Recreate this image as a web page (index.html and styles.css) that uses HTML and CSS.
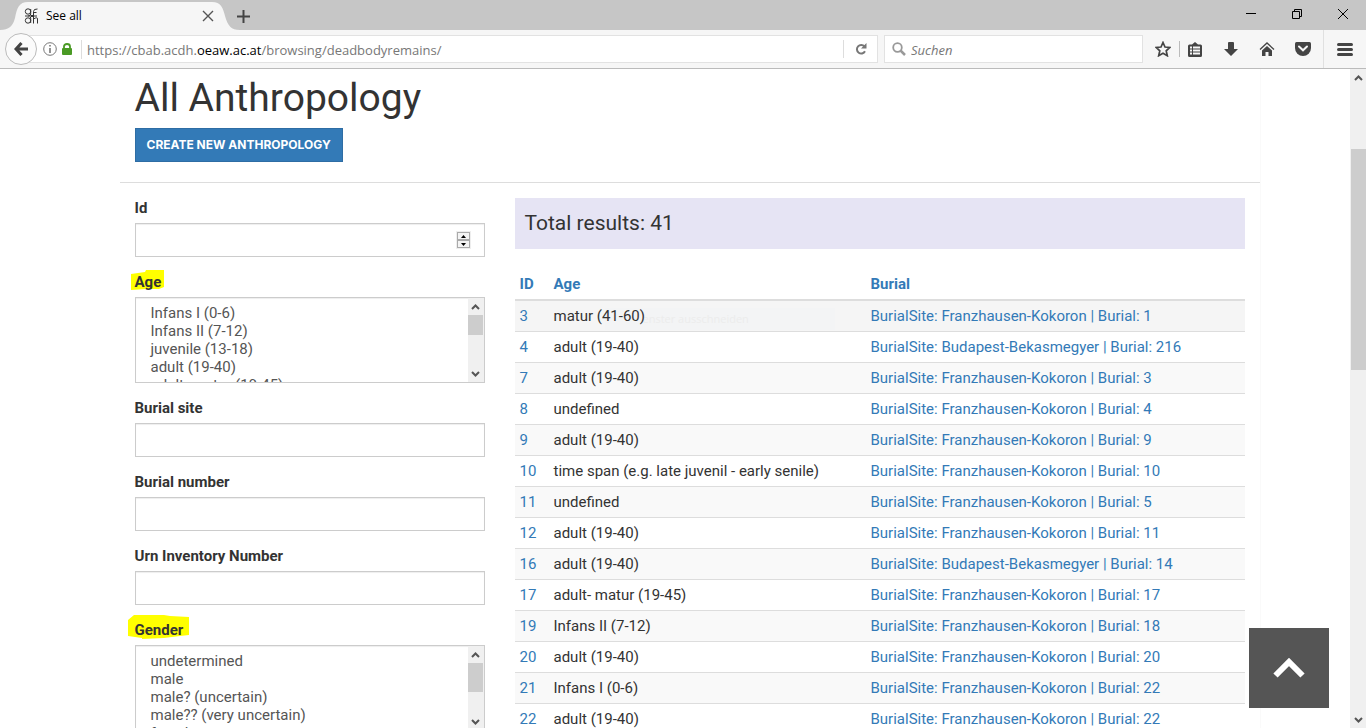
FILE: index.html
```html
<!DOCTYPE html>
<html lang="en">
<head>
<meta charset="utf-8">
<title>See all</title>
<link rel="stylesheet" href="styles.css">
</head>
<body>
<header class="browser">
  <div class="tabbar">
    <div class="tab">
      <svg class="tab-shape" width="240" height="30" viewBox="0 0 240 30" aria-hidden="true"><path d="M0 30C9 30 13 26 15 18C17 8 19 2 28 2H212C221 2 223 8 225 16C228 26 231 30 240 30Z" fill="#f6f6f6"/></svg>
      <svg class="favicon" width="16" height="16" viewBox="0 0 16 16" fill="none" stroke="#333" aria-hidden="true"><circle cx="4" cy="3.500" r="2.700"/><circle cx="4" cy="12.500" r="2.700"/><path d="M6.700 1V6Q6.500 8 4 8H1M6.700 15V10M9.500 15.500V3.500Q9.500 .8 13.500 1M9.500 4.500H12.500M4 8H13M6 6L10 10M10 6L6 10M9.500 11Q13.500 8.500 13.500 11V15.500"/></svg>
      <span class="tab-title">See all</span>
      <button class="plain" aria-label="Close tab"><svg width="12" height="12" viewBox="0 0 12 12" stroke="#555" stroke-width="1.4"><path d="M1 1L11 11M11 1L1 11"/></svg></button>
    </div>
    <button class="plain new-tab" aria-label="New tab"><svg width="13" height="13" viewBox="0 0 13 13" stroke="#444" stroke-width="2"><path d="M6.500 0V13M0 6.500H13"/></svg></button>
    <div class="window-buttons">
      <button class="plain" aria-label="Minimize"><svg width="10" height="10" viewBox="0 0 10 10" stroke="#000"><path d="M0 4.500H10"/></svg></button>
      <button class="plain" aria-label="Restore"><svg width="10" height="10" viewBox="0 0 10 10" fill="none" stroke="#000"><path d="M.5 2.500H7.500V9.500H.5ZM2.500 2.500V.5H9.500V7.500H7.500"/></svg></button>
      <button class="plain" aria-label="Close"><svg width="10" height="10" viewBox="0 0 10 10" stroke="#000"><path d="M0 0L10 10M10 0L0 10"/></svg></button>
    </div>
  </div>
  <div class="toolbar">
    <button class="plain back" aria-label="Back"><svg width="14" height="14" viewBox="0 0 14 14" fill="none" stroke="#444" stroke-width="3"><path d="M7.500 1L2 7L7.500 13M2 7H14"/></svg></button>
    <div class="urlbar">
      <svg width="14" height="14" viewBox="0 0 14 14" fill="none" stroke="#777" aria-hidden="true"><circle cx="7" cy="7" r="6.300"/><path d="M7 6V11M7 3V4.600" stroke-width="1.600"/></svg>
      <svg width="10" height="12" viewBox="0 0 10 12" aria-hidden="true"><rect y="5" width="10" height="7" rx="1" fill="#4a9a25"/><path d="M2 6V3.500Q2 1 5 1T8 3.500V6" fill="none" stroke="#4a9a25" stroke-width="1.800"/></svg>
      <div class="address" role="textbox" aria-label="Address">https://cbab.acdh.<b>oeaw.ac.at</b>/browsing/deadbodyremains/</div>
      <button class="plain reload" aria-label="Reload"><svg width="12" height="12" viewBox="0 0 12 12"><path d="M9.500 3.500A4.300 4.300 0 1 0 10 8.300" fill="none" stroke="#777" stroke-width="2"/><path d="M11.500 0V5.500H6Z" fill="#777"/></svg></button>
    </div>
    <label class="search">
      <svg width="14" height="14" viewBox="0 0 14 14" fill="none" stroke="#999" aria-hidden="true"><circle cx="5.500" cy="5.500" r="4.300" stroke-width="1.800"/><path d="M8.500 8.500L13 13" stroke-width="2.500"/></svg>
      <input type="text" placeholder="Suchen" aria-label="Suchen">
    </label>
    <nav class="tools">
      <button class="plain star" aria-label="Bookmark"><svg width="16" height="16" viewBox="0 0 16 16" fill="none" stroke="#444" stroke-width="1.700"><path d="M8 1.500L10 6L14.800 6.500L11.200 9.800L12.300 14.700L8 12.200L3.700 14.700L4.800 9.800L1.200 6.500L6 6Z"/></svg></button>
      <button class="plain split" aria-label="Library"><svg width="14" height="15" viewBox="0 0 14 15"><path d="M1.500 2.500H4L7 0L10 2.500H12.500Q14 2.500 14 4V13.500Q14 15 12.500 15H1.500Q0 15 0 13.500V4Q0 2.500 1.500 2.500Z" fill="#444"/><path d="M2 5.500H4M5 5.500H12M2 8.500H4M5 8.500H12M2 11.500H4M5 11.500H12" stroke="#f6f6f6" stroke-width="2"/></svg></button>
      <button class="plain" aria-label="Downloads"><svg width="14" height="14" viewBox="0 0 14 14" fill="#444"><path d="M4 1Q4 0 5 0H9Q10 0 10 1V7H14L7 14L0 7H4Z"/></svg></button>
      <button class="plain" aria-label="Home"><svg width="16" height="14" viewBox="0 0 16 14"><path d="M1 7.500L8 1L15 7.500" fill="none" stroke="#444" stroke-width="1.300"/><path d="M3 8.500L8 4L13 8.500V14H9.500V10H6.500V14H3Z" fill="#444"/></svg></button>
      <button class="plain" aria-label="Pocket"><svg width="16" height="14" viewBox="0 0 16 14"><path d="M1.500 0H14.500Q16 0 16 1.500V6A8 8 0 0 1 0 6V1.500Q0 0 1.500 0Z" fill="#444"/><path d="M4 4.500L8 8.300L12 4.500" fill="none" stroke="#f6f6f6" stroke-width="2" stroke-linecap="round"/></svg></button>
      <button class="plain menu" aria-label="Menu"><svg width="16" height="13" viewBox="0 0 16 13" stroke="#444" stroke-width="3" stroke-linecap="round"><path d="M1.500 1.500H14.500M1.500 6.500H14.500M1.500 11.500H14.500"/></svg></button>
    </nav>
  </div>
</header>
<div class="viewport">
  <div class="page">
    <main class="container">
      <div class="page-head">
        <h1>All Anthropology</h1>
        <a class="create" href="#">CREATE NEW ANTHROPOLOGY</a>
      </div>
      <div class="columns">
        <form class="filters">
          <div class="field">
            <label for="id">Id</label>
            <div class="control number"><input id="id" type="text" inputmode="numeric">
              <div class="spinner">
                <button type="button" class="plain" aria-label="Increase"><svg width="5" height="3" viewBox="0 0 5 3"><path d="M0 3L2.500 0L5 3Z"/></svg></button>
                <button type="button" class="plain" aria-label="Decrease"><svg width="5" height="3" viewBox="0 0 5 3"><path d="M0 0L2.500 3L5 0Z"/></svg></button>
              </div>
            </div>
          </div>
          <div class="field">
            <label for="age"><svg class="marker marker-age" width="34" height="22" viewBox="0 0 34 22" aria-hidden="true"><path d="M0 4L14 2L15 0H33V17L28 19H15L0 20Z" fill="#ff0"/></svg><span>Age</span></label>
            <div class="control list">
              <select id="age" multiple>
                <option>Infans I (0-6)</option><option>Infans II (7-12)</option><option>juvenile (13-18)</option><option>adult (19-40)</option><option>adult- matur (19-45)</option><option>matur (41-60)</option><option>undefined</option>
              </select>
              <div class="scroll"><svg width="9" height="6" viewBox="0 0 9 6"><path d="M1 5L4.500 1.500L8 5"/></svg><i class="thumb thumb-age"></i><svg width="9" height="6" viewBox="0 0 9 6"><path d="M1 1L4.500 4.500L8 1"/></svg></div>
            </div>
          </div>
          <div class="field"><label for="site">Burial site</label><div class="control"><input id="site" type="text"></div></div>
          <div class="field"><label for="number">Burial number</label><div class="control"><input id="number" type="text"></div></div>
          <div class="field"><label for="urn">Urn Inventory Number</label><div class="control"><input id="urn" type="text"></div></div>
          <div class="field">
            <label for="gender"><svg class="marker marker-gender" width="62" height="26" viewBox="0 0 62 26" aria-hidden="true"><path d="M0 6L6 1H36L42 2L61 3V21L52 22L36 24L14 25V24L0 22Z" fill="#ff0"/></svg><span>Gender</span></label>
            <div class="control list">
              <select id="gender" multiple>
                <option>undetermined</option><option>male</option><option>male? (uncertain)</option><option>male?? (very uncertain)</option><option>female</option><option>female? (uncertain)</option>
              </select>
              <div class="scroll"><svg width="9" height="6" viewBox="0 0 9 6"><path d="M1 5L4.500 1.500L8 5"/></svg><i class="thumb thumb-gender"></i><svg width="9" height="6" viewBox="0 0 9 6"><path d="M1 1L4.500 4.500L8 1"/></svg></div>
            </div>
          </div>
        </form>
        <section class="results">
          <h2>Total results: 41</h2>
          <table>
            <thead><tr><th class="col-id"><a href="#">ID</a></th><th class="col-age"><a href="#">Age</a></th><th><a href="#">Burial</a></th></tr></thead>
            <tbody>
              <tr class="hovered"><td><a href="#">3</a></td><td class="age-cell"><span class="ghost">enster ausschneiden</span>matur (41-60)</td><td><a href="#">BurialSite: Franzhausen-Kokoron | Burial: 1</a></td></tr>
              <tr><td><a href="#">4</a></td><td>adult (19-40)</td><td><a href="#">BurialSite: Budapest-Bekasmegyer | Burial: 216</a></td></tr>
              <tr><td><a href="#">7</a></td><td>adult (19-40)</td><td><a href="#">BurialSite: Franzhausen-Kokoron | Burial: 3</a></td></tr>
              <tr><td><a href="#">8</a></td><td>undefined</td><td><a href="#">BurialSite: Franzhausen-Kokoron | Burial: 4</a></td></tr>
              <tr><td><a href="#">9</a></td><td>adult (19-40)</td><td><a href="#">BurialSite: Franzhausen-Kokoron | Burial: 9</a></td></tr>
              <tr><td><a href="#">10</a></td><td>time span (e.g. late juvenil - early senile)</td><td><a href="#">BurialSite: Franzhausen-Kokoron | Burial: 10</a></td></tr>
              <tr><td><a href="#">11</a></td><td>undefined</td><td><a href="#">BurialSite: Franzhausen-Kokoron | Burial: 5</a></td></tr>
              <tr><td><a href="#">12</a></td><td>adult (19-40)</td><td><a href="#">BurialSite: Franzhausen-Kokoron | Burial: 11</a></td></tr>
              <tr><td><a href="#">16</a></td><td>adult (19-40)</td><td><a href="#">BurialSite: Budapest-Bekasmegyer | Burial: 14</a></td></tr>
              <tr><td><a href="#">17</a></td><td>adult- matur (19-45)</td><td><a href="#">BurialSite: Franzhausen-Kokoron | Burial: 17</a></td></tr>
              <tr><td><a href="#">19</a></td><td>Infans II (7-12)</td><td><a href="#">BurialSite: Franzhausen-Kokoron | Burial: 18</a></td></tr>
              <tr><td><a href="#">20</a></td><td>adult (19-40)</td><td><a href="#">BurialSite: Franzhausen-Kokoron | Burial: 20</a></td></tr>
              <tr><td><a href="#">21</a></td><td>Infans I (0-6)</td><td><a href="#">BurialSite: Franzhausen-Kokoron | Burial: 22</a></td></tr>
              <tr><td><a href="#">22</a></td><td>adult (19-40)</td><td><a href="#">BurialSite: Franzhausen-Kokoron | Burial: 22</a></td></tr>
            </tbody>
          </table>
        </section>
      </div>
    </main>
  </div>
  <div class="scroll page-scroll"><svg width="9" height="6" viewBox="0 0 9 6"><path d="M1 5L4.500 1.500L8 5"/></svg><i class="thumb thumb-page"></i><svg width="9" height="6" viewBox="0 0 9 6"><path d="M1 1L4.500 4.500L8 1"/></svg></div>
  <button class="plain to-top" aria-label="Back to top"><svg width="32" height="20" viewBox="0 0 32 20" fill="none" stroke="#fff" stroke-width="6"><path d="M2.500 17.500L16 4L29.500 17.500"/></svg></button>
</div>
</body>
</html>
```

FILE: styles.css
```css
* { box-sizing: border-box; }
body {
  margin: 0;
  height: 100vh;
  display: flex;
  flex-direction: column;
  overflow: hidden;
  background: #fff;
  color: #333;
  font: 15px/20px Roboto, "Liberation Sans", sans-serif;
}
a { color: #337ab7; text-decoration: none; }
svg { display: block; flex: none; }
.plain {
  display: flex;
  align-items: center;
  justify-content: center;
  padding: 0;
  border: 0;
  background: none;
}

/* Browser frame */
.browser { font-family: "Open Sans", "Noto Sans", sans-serif; }
.tabbar { display: flex; height: 30px; background: #c6c6c6; }
.tab {
  position: relative;
  display: flex;
  align-items: center;
  width: 228px;
  padding: 2px 14px 0 24px;
  color: #000;
  font-size: 12px;
}
.tab-shape { position: absolute; left: 0; top: 0; }
.favicon, .tab-title, .tab button { position: relative; }
.tab-title { flex: 1; padding-left: 6px; }
.new-tab { width: 30px; padding-top: 2px; }
.window-buttons { display: flex; align-items: center; gap: 36px; margin-left: auto; padding: 0 18px 2px 0; }
.toolbar {
  display: flex;
  align-items: center;
  height: 39px;
  background: #f6f6f6;
  border-bottom: 1px solid #bbb;
  padding-left: 5px;
}
.back {
  position: relative;
  flex: none;
  width: 32px;
  height: 32px;
  border: 1px solid #bbb;
  border-radius: 50%;
  background: #fbfbfb;
}
.urlbar {
  flex: 1;
  display: flex;
  align-items: center;
  gap: 5px;
  height: 28px;
  margin-left: -16px;
  padding-left: 21px;
  border: 1px solid #e2e2e2;
  background: #fff;
}
.address {
  flex: 1;
  margin-left: 4px;
  padding: 1px 0 0 5px;
  border-left: 1px solid #ddd;
  color: #777;
  font-size: 13px;
  line-height: 18px;
}
.address b { color: #000; font-weight: 400; }
.reload { width: 34px; height: 18px; border-left: 1px solid #ddd; }
.search {
  display: flex;
  align-items: center;
  gap: 5px;
  width: 259px;
  height: 28px;
  margin-left: 6px;
  padding-left: 7px;
  border: 1px solid #e2e2e2;
  background: #fff;
}
.search input {
  flex: 1;
  min-width: 0;
  padding: 2px 0 0;
  border: 0;
  outline: 0;
  font: italic 13px/18px "Open Sans", "Noto Sans", sans-serif;
}
.search input::placeholder { color: #777; }
.tools { display: flex; height: 38px; padding-left: 4px; }
.tools button { width: 36px; }
.tools .star { width: 32px; }
.tools .split {
  width: 32px;
  margin-right: 2px;
  background: linear-gradient(#bbb, #bbb) 0 50% / 1px 16px no-repeat;
}
.tools .menu { width: 43px; margin-left: 2px; border-left: 1px solid #e0e0e0; }

/* Page */
.viewport { position: relative; flex: 1; min-height: 0; display: flex; }
.page { flex: 1; min-width: 0; padding-left: 30px; overflow: hidden; }
.container { max-width: 1141px; min-height: 100%; margin: 0 auto; border-right: 1px solid #fafafa; }
.page-head { padding: 8px 15px 20px; border-bottom: 1px solid #ddd; }
h1 { margin: 0 0 9px; font-size: 39px; line-height: 42px; font-weight: 400; }
.create {
  display: inline-block;
  padding: 6px 11px;
  border: 1px solid #2e6da4;
  background: #337ab7;
  color: #fff;
  font: 700 12px/20px Inter, Roboto, sans-serif;
}
.columns { display: flex; gap: 30px; padding: 15px 15px 0; }
.filters { flex: 0 0 350px; }
.field { margin-bottom: 15px; }
.field label { position: relative; display: block; margin-bottom: 5px; font-weight: 700; }
.field label span { position: relative; }
.marker { position: absolute; left: -4px; top: -2px; }
.marker-gender { left: -7px; top: -6px; }
.control {
  display: flex;
  height: 34px;
  border: 1px solid #ccc;
  background: #fff;
  box-shadow: inset 0 1px 1px #eee;
}
.control input { flex: 1; min-width: 0; padding: 6px 12px; border: 0; outline: 0; background: none; font: inherit; color: #555; }
.number { align-items: center; padding-right: 13px; }
.spinner { width: 15px; padding: 1px; background: #eee; }
.spinner button { width: 13px; height: 8px; border: 1px solid #aaa; background: #f4f4f4; }
.list { height: 86px; }
.list select {
  flex: 1;
  min-width: 0;
  height: 84px;
  padding: 6px 12px;
  border: 0;
  outline: 0;
  background: none;
  color: #555;
  font: inherit;
  scrollbar-width: none;
}
.list option { height: 18px; min-height: 18px; padding: 0 3px; line-height: 18px; }
.scroll {
  display: flex;
  flex-direction: column;
  align-items: center;
  width: 16px;
  padding: 6px 0 5px;
  background: #f0f0f0;
}
.scroll path { fill: none; stroke: #555; stroke-width: 2; }
.thumb { width: 15px; margin-bottom: auto; background: #cdcdcd; }
.thumb-age { height: 20px; margin-top: 5px; }
.thumb-gender { height: 29px; margin-top: 5px; }
.page-scroll { flex: none; }
.thumb-page { height: 221px; margin-top: 68px; }

.results { flex: 1; min-width: 0; }
h2 { margin: 0 0 20px; padding: 10px 10px 11px; background: #e6e4f4; font-size: 21px; line-height: 30px; font-weight: 400; }
table { width: 100%; border-collapse: collapse; table-layout: fixed; }
th, td { padding: 5px; text-align: left; line-height: 20px; }
th { border-bottom: 2px solid #ddd; }
td { border-top: 1px solid #ddd; }
.col-id { width: 34px; }
.col-age { width: 317px; }
tbody tr:nth-child(odd) { background: #f9f9f9; }
tbody tr.hovered { background: #f5f5f5; }
.age-cell { position: relative; z-index: 0; }
.ghost {
  position: absolute;
  left: 56px;
  top: 7px;
  width: 230px;
  padding-left: 38px;
  background: #f3f4f5;
  color: #ececec;
  font: 11px/22px "Open Sans", sans-serif;
  z-index: -1;
}
.to-top {
  position: absolute;
  right: 37px;
  bottom: 20px;
  width: 80px;
  height: 80px;
  background: #555;
}
```
